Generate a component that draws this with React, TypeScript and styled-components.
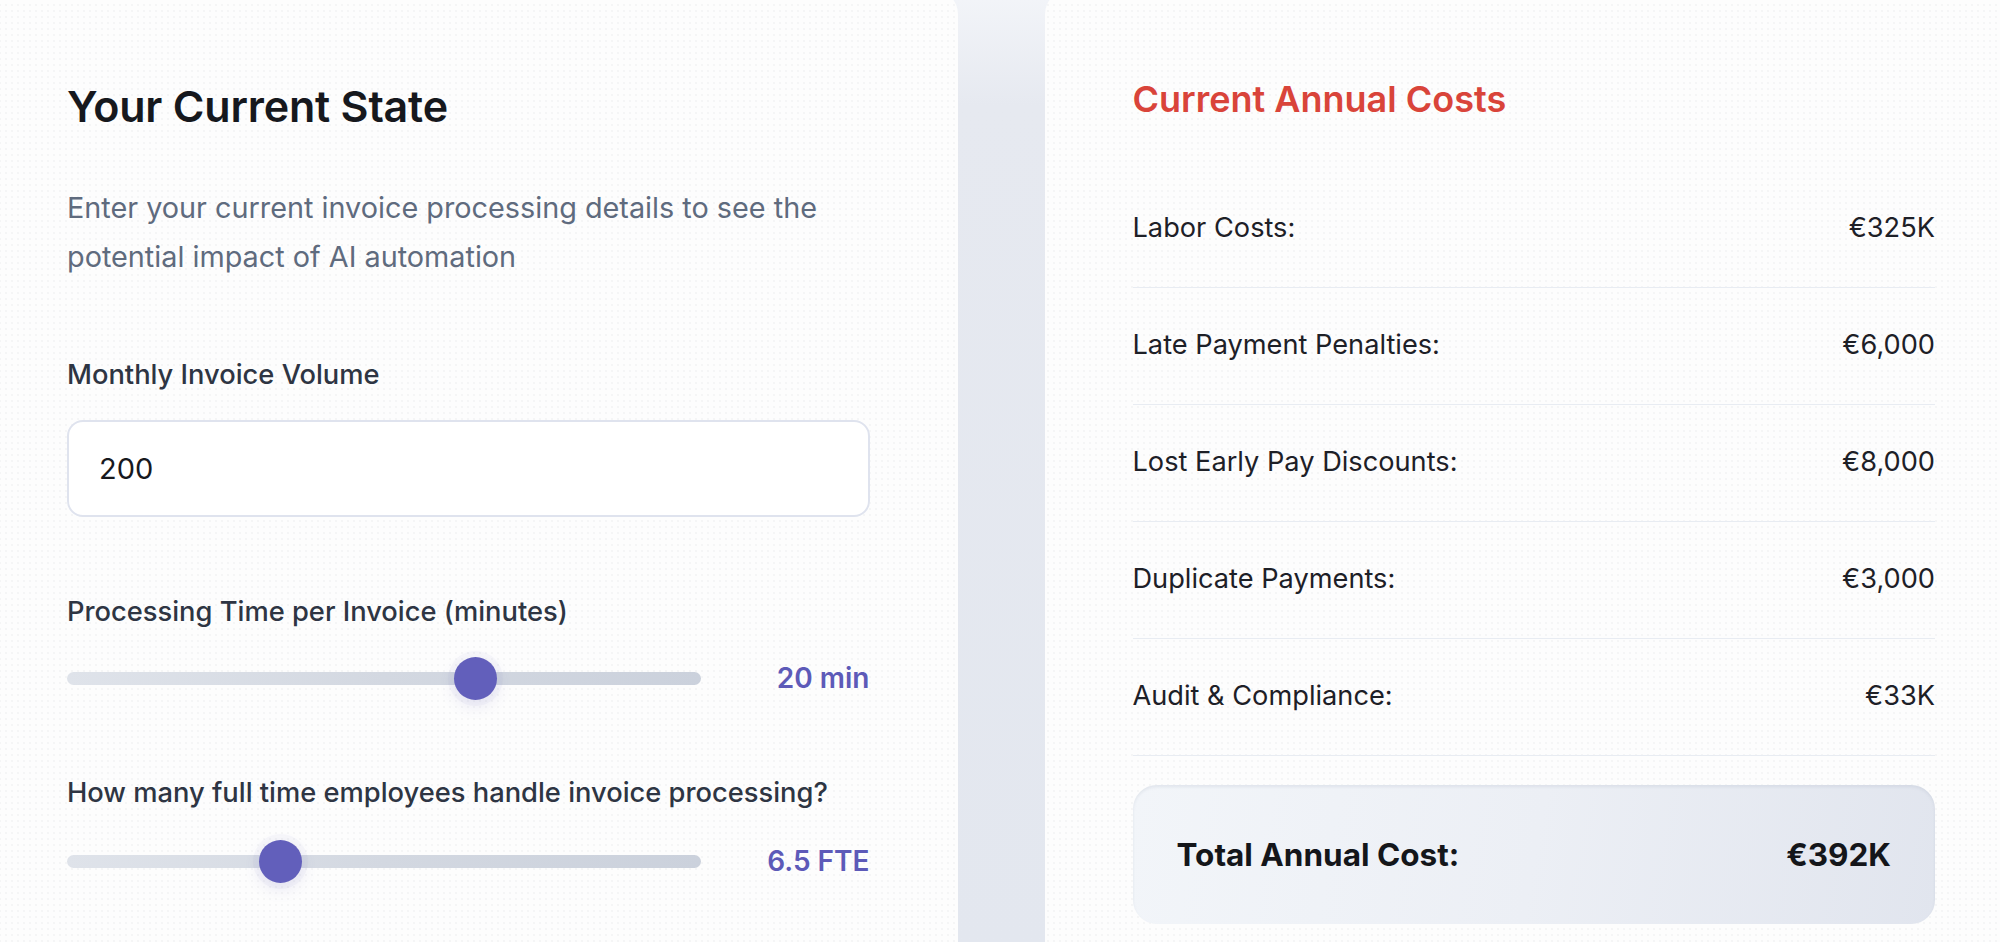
import React from "react";
import styled, { createGlobalStyle } from "styled-components";

const GlobalStyle = createGlobalStyle`
  html, body {
    margin: 0;
    padding: 0;
    background: #e6e9f0;
    overflow: hidden;
  }
  body {
    font-family: Inter, "Noto Sans", "Liberation Sans", sans-serif;
    -webkit-font-smoothing: antialiased;
  }
  * { box-sizing: border-box; }
`;

const Page = styled.div`
  display: flex;
  gap: 87px;
  margin: -10px -23px 0 -21px;
  height: 960px;
  background: linear-gradient(180deg, #f3f5f9 0%, #e6e9f0 12%, #e3e7ef 100%);
`;

const Panel = styled.section`
  flex: 1;
  border-radius: 24px 24px 0 0;
  background-color: #fdfdfd;
  background-image: radial-gradient(circle, rgba(30, 41, 59, 0.035) 1px, transparent 1.2px);
  background-size: 6px 6px;
  padding: 90px 88px 0;
`;

const Title = styled.h2`
  margin: 0;
  font-size: 43px;
  line-height: 52px;
  font-weight: 600;
  color: #16181d;
  letter-spacing: -0.2px;
`;

const Subtitle = styled.p`
  margin: 51px 0 0;
  font-size: 28.8px;
  line-height: 49px;
  color: #5f6b7e;
`;

const Label = styled.label<{ $gap: number }>`
  display: block;
  margin-top: ${(p) => p.$gap}px;
  font-size: 27.3px;
  line-height: 34px;
  font-weight: 500;
  color: #2e3543;
`;

const Input = styled.input`
  display: block;
  width: 100%;
  height: 97px;
  margin-top: 28px;
  padding: 0 30px;
  border: 2px solid #dfe3ee;
  border-radius: 16px;
  background: #ffffff;
  font-family: inherit;
  font-size: 29px;
  color: #17191e;
  outline: none;
`;

const SliderRow = styled.div<{ $gap: number }>`
  display: grid;
  grid-template-columns: 1fr 136px;
  column-gap: 33px;
  align-items: center;
  height: 44px;
  margin-top: ${(p) => p.$gap}px;
`;

const Range = styled.input`
  -webkit-appearance: none;
  appearance: none;
  width: 100%;
  height: 44px;
  margin: 0;
  background: transparent;
  cursor: pointer;

  &::-webkit-slider-runnable-track {
    height: 13px;
    border-radius: 7px;
    background: linear-gradient(90deg, #dfe3ea 0%, #d3d8e1 50%, #cbd1dc 100%);
  }
  &::-webkit-slider-thumb {
    -webkit-appearance: none;
    width: 43px;
    height: 43px;
    margin-top: -15px;
    border-radius: 50%;
    background: #625fbb;
    border: none;
    box-shadow: 0 6px 16px rgba(98, 95, 187, 0.14), 0 0 0 6px rgba(98, 95, 187, 0.04);
  }
`;

const SliderValue = styled.span`
  text-align: right;
  font-size: 28px;
  font-weight: 600;
  color: #5d5ab8;
  white-space: nowrap;
`;

const CostTitle = styled.h2`
  margin: 0;
  font-size: 36px;
  line-height: 38px;
  font-weight: 600;
  color: #d9443a;
`;

const CostList = styled.div`
  margin-top: 53px;
  display: flex;
  flex-direction: column;
`;

const CostRow = styled.div`
  display: flex;
  justify-content: space-between;
  align-items: center;
  padding: 40px 0 42px;
  border-bottom: 1px solid #e8ecf2;
  font-size: 27.2px;
  line-height: 34px;
  color: #1d2027;
`;

const TotalBox = styled.div`
  margin-top: 29px;
  height: 139px;
  padding: 0 44px;
  display: flex;
  justify-content: space-between;
  align-items: center;
  border-radius: 24px;
  background: linear-gradient(100deg, #f2f5f9 0%, #eceff5 50%, #e1e5ee 100%);
  box-shadow: inset 0 2px 3px rgba(148, 160, 184, 0.18);
  font-size: 31.5px;
  font-weight: 700;
  color: #14161a;
`;

const costs = [
  { label: "Labor Costs:", value: "€325K" },
  { label: "Late Payment Penalties:", value: "€6,000" },
  { label: "Lost Early Pay Discounts:", value: "€8,000" },
  { label: "Duplicate Payments:", value: "€3,000" },
  { label: "Audit & Compliance:", value: "€33K" },
];

export default function App() {
  const [volume, setVolume] = React.useState("200");
  const [minutes, setMinutes] = React.useState(20);
  const [fte, setFte] = React.useState(6.5);

  return (
    <>
      <GlobalStyle />
      <Page>
        <Panel>
          <Title>Your Current State</Title>
          <Subtitle>
            Enter your current invoice processing details to see the potential impact of AI automation
          </Subtitle>
          <Label $gap={77}>Monthly Invoice Volume</Label>
          <Input value={volume} onChange={(e) => setVolume(e.target.value)} />
          <Label $gap={78}>Processing Time per Invoice (minutes)</Label>
          <SliderRow $gap={27}>
            <Range
              type="range"
              min={1}
              max={30}
              step={1}
              value={minutes}
              onChange={(e) => setMinutes(Number(e.target.value))}
            />
            <SliderValue>{minutes} min</SliderValue>
          </SliderRow>
          <Label $gap={76}>How many full time employees handle invoice processing?</Label>
          <SliderRow $gap={29}>
            <Range
              type="range"
              min={0}
              max={20}
              step={0.5}
              value={fte}
              onChange={(e) => setFte(Number(e.target.value))}
            />
            <SliderValue>{fte} FTE</SliderValue>
          </SliderRow>
        </Panel>
        <Panel>
          <CostTitle>Current Annual Costs</CostTitle>
          <CostList>
            {costs.map((c) => (
              <CostRow key={c.label}>
                <span>{c.label}</span>
                <span>{c.value}</span>
              </CostRow>
            ))}
          </CostList>
          <TotalBox>
            <span>Total Annual Cost:</span>
            <span>€392K</span>
          </TotalBox>
        </Panel>
      </Page>
    </>
  );
}
